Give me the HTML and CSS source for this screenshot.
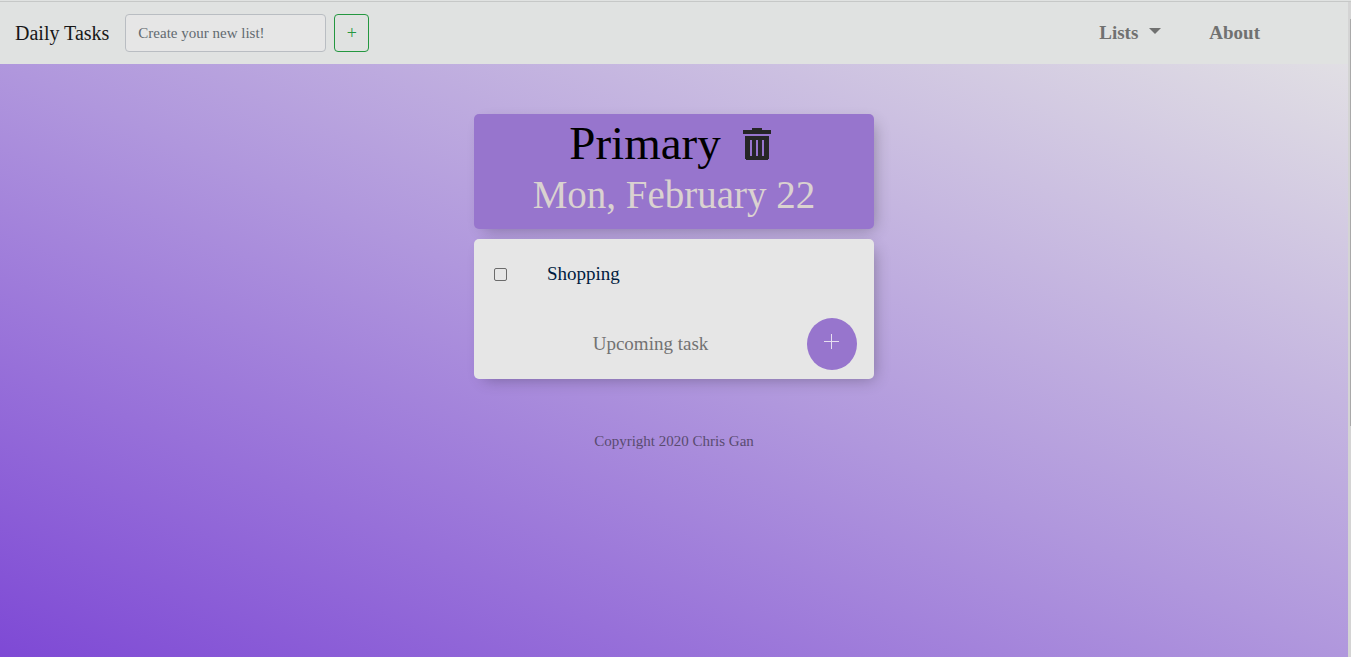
FILE: index.html
```html
<!DOCTYPE html>
<html lang="en">
<head>
<meta charset="utf-8">
<title>Daily Tasks</title>
<link rel="stylesheet" href="styles.css">
</head>
<body>
<div class="page">
  <nav class="navbar">
    <a class="brand" href="#">Daily Tasks</a>
    <form class="new-list">
      <input class="list-input" type="text" placeholder="Create your new list!" aria-label="New list name">
      <button class="list-add" type="button" aria-label="Create list">+</button>
    </form>
    <div class="links">
      <a class="link" href="#">Lists<span class="caret"></span></a>
      <a class="link" href="#">About</a>
    </div>
  </nav>
  <div class="backdrop">
    <main class="content">
      <header class="card heading">
        <div class="title-row">
          <h1 class="title">Primary</h1>
          <button class="trash" type="button" aria-label="Delete list">
            <svg width="28" height="32" viewBox="0 0 28 32" fill="#262626" shape-rendering="crispEdges"><path d="M9 0h10v2h9v4H0V2h9z"/><path fill-rule="evenodd" d="M2 8h24v23h-1v1H3v-1H2zM7 12v16h2V12zM13 12v16h2V12zM19 12v16h2V12z"/></svg>
          </button>
        </div>
        <h2 class="date">Mon, February 22</h2>
      </header>
      <section class="card tasks">
        <div class="task">
          <input class="check" type="checkbox" id="shopping">
          <label class="task-name" for="shopping">Shopping</label>
        </div>
        <form class="new-task">
          <input class="task-input" type="text" placeholder="Upcoming task" aria-label="Upcoming task">
          <button class="task-add" type="button" aria-label="Add task"><svg width="15" height="15" viewBox="0 0 15 15" fill="#e6dff0" shape-rendering="crispEdges"><path d="M7 0h1v7h7v1H8v7H7V8H0V7h7z"/></svg></button>
        </form>
      </section>
      <footer class="footer">Copyright 2020 Chris Gan</footer>
    </main>
  </div>
</div>
<div class="scroll-track"><div class="scroll-thumb"></div></div>
</body>
</html>
```
FILE: styles.css
```css
* { box-sizing: border-box; }
body {
  margin: 0;
  min-height: 100vh;
  display: flex;
  border-top: 1px solid #e0e2e1;
  font-family: "Liberation Serif", "Times New Roman", serif;
  font-size: 15px;
  line-height: 24px;
}
.page {
  flex: 1;
  display: flex;
  flex-direction: column;
  border-top: 1px solid #c6c8c7;
}
.navbar {
  display: flex;
  align-items: center;
  padding: 12px 88px 12px 15px;
  background: #e0e2e1;
}
.brand {
  margin-right: 16px;
  font-size: 20px;
  color: #171717;
  text-decoration: none;
}
.new-list { display: flex; gap: 8px; }
.list-input {
  width: 201px;
  height: 38px;
  padding: 6px 12px;
  border: 1px solid #b9bdc2;
  border-radius: 4px;
  background: #e6e6e6;
  font: inherit;
}
.list-input::placeholder { color: #626a70; opacity: 1; }
.list-add {
  width: 35px;
  height: 38px;
  padding: 0;
  border: 1px solid #249740;
  border-radius: 4px;
  background: transparent;
  color: #249740;
  font: inherit;
  font-size: 18px;
}
.links { display: flex; gap: 48px; margin-left: auto; }
.link {
  font-size: 19px;
  font-weight: bold;
  color: #707170;
  text-decoration: none;
}
.caret {
  display: inline-block;
  margin-left: 11px;
  vertical-align: 5px;
  border: 6px solid transparent;
  border-top-color: #707170;
  border-bottom: 0;
}
.backdrop {
  flex: 1;
  padding-top: 50px;
  background: linear-gradient(to top right, #7e49d5, #b097dd 50%, #e1dfe4);
}
.content {
  width: 400px;
  max-width: 100%;
  margin: 0 auto;
}
.card {
  border-radius: 5px;
  box-shadow: 5px 5px 15px -5px rgba(0, 0, 0, 0.3);
}
.heading {
  padding: 1px 0 10px;
  background: #9775cd;
  text-align: center;
}
.title-row {
  display: flex;
  align-items: center;
  justify-content: center;
  gap: 22px;
  padding-right: 8px;
}
.title {
  margin: 0;
  font-size: 47px;
  line-height: 56px;
  font-weight: normal;
  color: #000;
}
.trash {
  display: flex;
  padding: 2px 0 0;
  border: 0;
  background: none;
}
.date {
  margin: 0;
  font-size: 39px;
  line-height: 48px;
  font-weight: normal;
  color: #dad2d0;
}
.tasks {
  margin-top: 10px;
  background: #e6e6e6;
}
.task {
  display: flex;
  align-items: center;
  height: 70px;
  padding-left: 20px;
}
.check {
  appearance: none;
  width: 13px;
  height: 13px;
  margin: 0 40px 0 0;
  border: 1px solid #6b6b6b;
  border-radius: 2px;
}
.check:checked { background: #9775cd; }
.task-name { font-size: 19px; color: #001b40; }
.new-task {
  display: flex;
  align-items: center;
  height: 70px;
  padding: 0 17px 0 20px;
}
.task-input {
  flex: 1;
  min-width: 0;
  padding: 0;
  border: 0;
  background: transparent;
  font: inherit;
  font-size: 19px;
  text-align: center;
}
.task-input::placeholder { color: #727272; opacity: 1; }
.task-add {
  display: flex;
  align-items: center;
  justify-content: center;
  width: 50px;
  height: 52px;
  padding: 0 2px 5px 0;
  border: 0;
  border-radius: 50%;
  background: #9775cd;
}
.footer {
  margin-top: 50px;
  text-align: center;
  color: #594b70;
}
.scroll-track {
  width: 3px;
  padding: 17px 0 0 2px;
  border-top: 1px solid #c6c8c7;
  background: #d4d4d4;
}
.scroll-thumb { height: 62vh; background: #a9a9a9; }
```
